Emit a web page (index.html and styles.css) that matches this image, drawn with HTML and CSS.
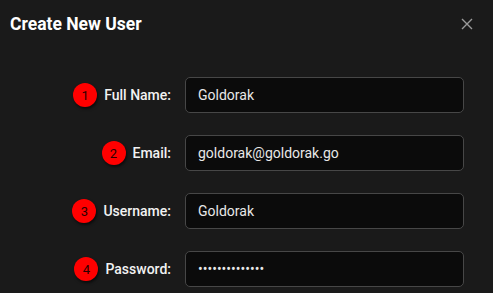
FILE: index.html
```html
<!DOCTYPE html>
<html>
<head>
<meta name="viewport" content="width=device-width, initial-scale=1">
<link rel="stylesheet" href="styles.css">
</head>
<body>
<div class="dialog">
  <div class="header">
    <h1 class="title">Create New User</h1>
    <button class="close" aria-label="close">
      <svg width="12" height="12" viewBox="0 0 12 12"><path d="M1 1L11 11M11 1L1 11" stroke="#9a9a9a" stroke-width="1.4"/></svg>
    </button>
  </div>
  <form class="form">
    <label class="label"><span class="badge">1</span>Full Name:</label>
    <input class="field" type="text" value="Goldorak">
    <label class="label"><span class="badge">2</span>Email:</label>
    <input class="field" type="text" value="goldorak@goldorak.go">
    <label class="label"><span class="badge">3</span>Username:</label>
    <input class="field" type="text" value="Goldorak">
    <label class="label"><span class="badge">4</span>Password:</label>
    <input class="field" type="password" value="goldorakgoldor">
  </form>
</div>
</body>
</html>
```

FILE: styles.css
```css
body {
  margin: 0;
  background-color: #1a1a1a;
  font-family: Roboto, "Liberation Sans", sans-serif;
  color: #f2f2f2;
}
.header {
  display: flex;
  justify-content: space-between;
  align-items: center;
  padding: 12px 20px 0 10px;
  height: 23px;
}
.title {
  margin: 0;
  font-size: 17.5px;
  font-weight: 700;
  color: #ffffff;
}
.close {
  background: none;
  border: none;
  padding: 0;
  width: 12px;
  height: 12px;
  display: flex;
  cursor: pointer;
}
.form {
  display: grid;
  grid-template-columns: 1fr 279px;
  column-gap: 14px;
  row-gap: 22px;
  padding: 42px 29px 0 0;
}
.label {
  display: flex;
  justify-content: flex-end;
  align-items: center;
  gap: 7px;
  font-size: 14px;
  font-weight: 500;
  color: #f2f2f2;
}
.badge {
  width: 24px;
  height: 24px;
  border-radius: 50%;
  background-color: #ff0000;
  color: #2a0000;
  font-size: 13px;
  font-weight: 400;
  display: flex;
  align-items: center;
  justify-content: center;
  box-shadow: 1px 2px 3px rgba(0, 0, 0, 0.6);
}
.field {
  box-sizing: border-box;
  height: 36px;
  padding: 0 12px;
  background-color: #0b0b0b;
  border: 1px solid #474747;
  border-radius: 5px;
  color: #e8e8e8;
  font-family: Roboto, "Liberation Sans", sans-serif;
  font-size: 14px;
  outline: none;
}
```
